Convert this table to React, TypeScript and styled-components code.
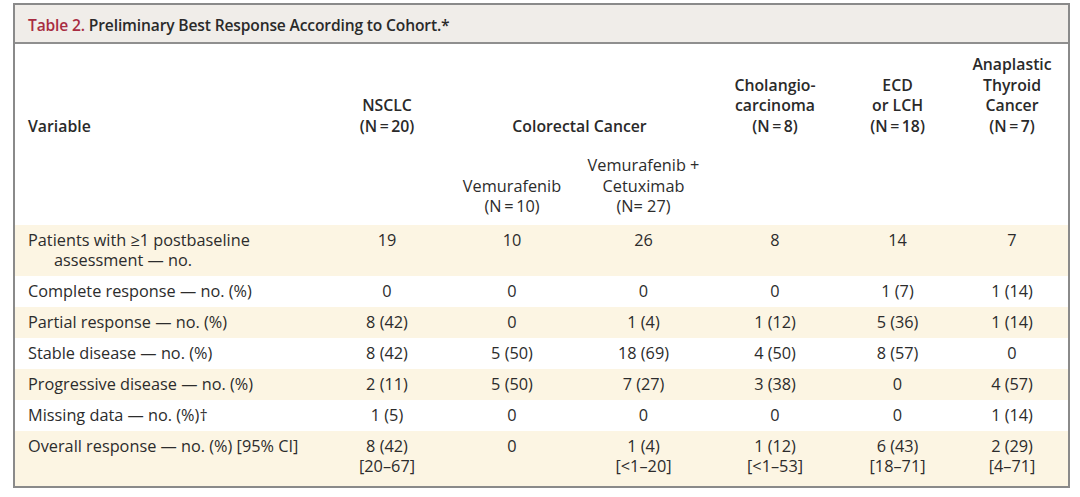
import React from "react";
import styled, { createGlobalStyle } from "styled-components";

const Global = createGlobalStyle`
  html, body { margin: 0; padding: 0; background: #ffffff; }
  body { font-family: "Open Sans", "Noto Sans", sans-serif; color: #2c2c2c; }
`;

const Frame = styled.div`
  margin: 3px 0 0 13px;
  width: 1053px;
  border: 2px solid #8a8a8a;
  background: #ffffff;
`;

const TitleBar = styled.div`
  background: #f0ede9;
  border-bottom: 2px solid #8f8f8f;
  padding: 9px 13px 6px;
  font-size: 15.6px;
  line-height: 22px;
  font-weight: 600;
  letter-spacing: -0.15px;
  color: #2a2a2a;
`;

const TableNo = styled.span`
  color: #a82c41;
`;

const Grid = styled.table`
  width: 100%;
  border-collapse: collapse;
  table-layout: fixed;
  font-size: 16.3px;
`;

const HeadCell = styled.th<{ $left?: boolean }>`
  font-weight: 600;
  font-size: 15.8px;
  line-height: 20.5px;
  text-align: ${(p) => (p.$left ? "left" : "center")};
  vertical-align: bottom;
  padding: 10px 0 0 ${(p) => (p.$left ? "13px" : "0")};
  color: #2a2a2a;
`;

const SubHeadCell = styled.th`
  font-weight: 400;
  line-height: 20.5px;
  text-align: center;
  vertical-align: bottom;
  padding: 19px 0 8px;
  color: #2c2c2c;
`;

const Row = styled.tr<{ $shaded?: boolean }>`
  background: ${(p) => (p.$shaded ? "#fcf5e3" : "#ffffff")};
`;

const Label = styled.td<{ $last?: boolean }>`
  text-align: left;
  vertical-align: top;
  line-height: 20px;
  padding: 5px 0 ${(p) => (p.$last ? 10 : 6)}px 13px;
  white-space: nowrap;
`;

const Hang = styled.span`
  display: block;
  padding-left: 26px;
`;

const Value = styled.td<{ $last?: boolean }>`
  text-align: center;
  vertical-align: top;
  line-height: 20px;
  padding: 5px 0 ${(p) => (p.$last ? 10 : 6)}px;
`;

const eq = "\u2009=\u2009";

type RowData = { label: React.ReactNode; values: React.ReactNode[]; shaded: boolean; last?: boolean };

const rows: RowData[] = [
  {
    label: (
      <>
        Patients with ≥1 postbaseline
        <Hang>assessment — no.</Hang>
      </>
    ),
    values: ["19", "10", "26", "8", "14", "7"],
    shaded: true,
  },
  { label: "Complete response — no. (%)", values: ["0", "0", "0", "0", "1 (7)", "1 (14)"], shaded: false },
  { label: "Partial response — no. (%)", values: ["8 (42)", "0", "1 (4)", "1 (12)", "5 (36)", "1 (14)"], shaded: true },
  { label: "Stable disease — no. (%)", values: ["8 (42)", "5 (50)", "18 (69)", "4 (50)", "8 (57)", "0"], shaded: false },
  { label: "Progressive disease — no. (%)", values: ["2 (11)", "5 (50)", "7 (27)", "3 (38)", "0", "4 (57)"], shaded: true },
  { label: "Missing data — no. (%)†", values: ["1 (5)", "0", "0", "0", "0", "1 (14)"], shaded: false },
  {
    label: "Overall response — no. (%) [95% CI]",
    values: [
      <>8 (42)<br />[20–67]</>,
      "0",
      <>1 (4)<br />[&lt;1–20]</>,
      <>1 (12)<br />[&lt;1–53]</>,
      <>6 (43)<br />[18–71]</>,
      <>2 (29)<br />[4–71]</>,
    ],
    shaded: true,
    last: true,
  },
];

export default function App() {
  return (
    <>
      <Global />
      <Frame>
        <TitleBar>
          <TableNo>Table 2.</TableNo> Preliminary Best Response According to Cohort.*
        </TitleBar>
        <Grid>
          <colgroup>
            <col style={{ width: 311 }} />
            <col style={{ width: 122 }} />
            <col style={{ width: 128 }} />
            <col style={{ width: 135 }} />
            <col style={{ width: 128 }} />
            <col style={{ width: 117 }} />
            <col style={{ width: 112 }} />
          </colgroup>
          <thead>
            <tr>
              <HeadCell $left>Variable</HeadCell>
              <HeadCell>NSCLC<br />(N{eq}20)</HeadCell>
              <HeadCell colSpan={2}>Colorectal Cancer</HeadCell>
              <HeadCell>Cholangio-<br />carcinoma<br />(N{eq}8)</HeadCell>
              <HeadCell>ECD<br />or LCH<br />(N{eq}18)</HeadCell>
              <HeadCell>Anaplastic<br />Thyroid<br />Cancer<br />(N{eq}7)</HeadCell>
            </tr>
            <tr>
              <SubHeadCell />
              <SubHeadCell />
              <SubHeadCell>Vemurafenib<br />(N{eq}10)</SubHeadCell>
              <SubHeadCell>Vemurafenib +<br />Cetuximab<br />(N= 27)</SubHeadCell>
              <SubHeadCell />
              <SubHeadCell />
              <SubHeadCell />
            </tr>
          </thead>
          <tbody>
            {rows.map((r, i) => (
              <Row key={i} $shaded={r.shaded}>
                <Label $last={r.last}>{r.label}</Label>
                {r.values.map((v, j) => (
                  <Value key={j} $last={r.last}>{v}</Value>
                ))}
              </Row>
            ))}
          </tbody>
        </Grid>
      </Frame>
    </>
  );
}
